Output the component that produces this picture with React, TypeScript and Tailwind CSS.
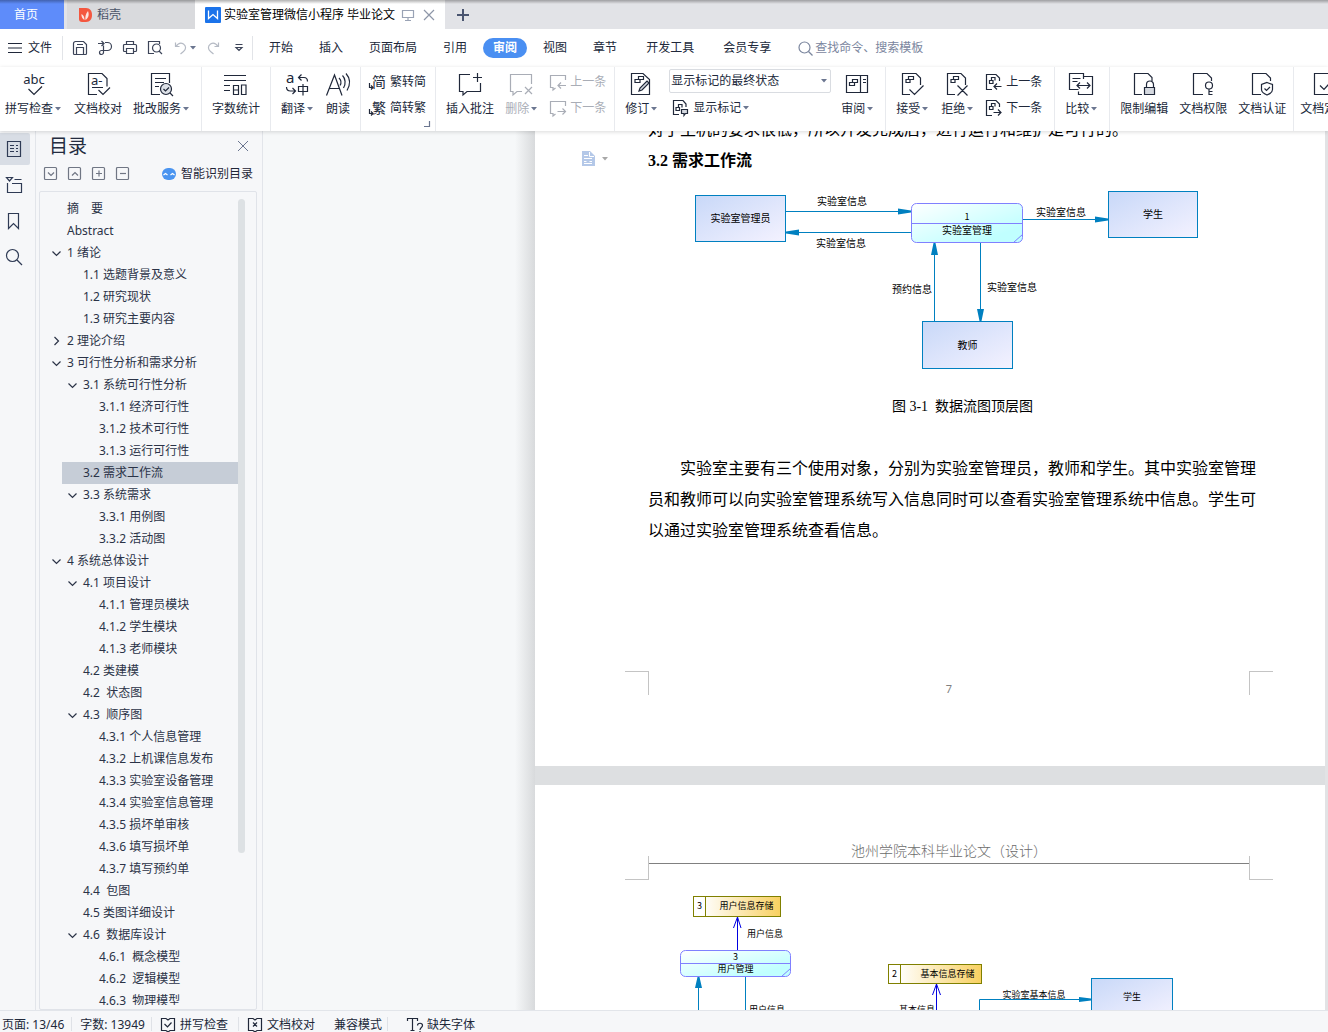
import { useState, type ReactNode } from 'react'
import clsx from 'clsx'

function Icon({ size = 24, w, children, className }: { size?: number; w?: number; children: ReactNode; className?: string }) {
  return (
    <svg
      width={w ?? size}
      height={size}
      viewBox={`0 0 ${w ?? size} ${size}`}
      fill="none"
      stroke="currentColor"
      strokeWidth="1.2"
      className={clsx('shrink-0 overflow-visible', className)}
      aria-hidden="true"
    >
      {children}
    </svg>
  )
}

function Caret({ className }: { className?: string }) {
  return (
    <svg width="6" height="4" viewBox="0 0 6 4" className={clsx('mx-[2px] shrink-0', className ?? 'fill-[#6b7690]')} aria-hidden="true">
      <path d="M0 0h6L3 3.5z" />
    </svg>
  )
}

/* ---------- large ribbon icons, 24x24 ---------- */

const docPath = 'M9 21.5H1.5V.5H15l4.5 4.5v7'

const icons = {
  spell: (
    <Icon>
      <text x="12" y="11" fontSize="13" textAnchor="middle" fill="currentColor" stroke="none">abc</text>
      <path d="M6.5 16l5.5 5.5 8-8" />
    </Icon>
  ),
  proof: (
    <Icon>
      <path d="M11 21.5H2.5V.5H16l5 5v8" />
      <text x="5" y="12" fontSize="13" fill="currentColor" stroke="none">a-</text>
      <path d="M6 14.5h11M12.5 17l4.5 4.5 7-7" />
    </Icon>
  ),
  review: (
    <Icon>
      <path d="M10 21.5H1.5V.5h18V10M5 5.5h11M5 9.5h9M5 13.5h4" />
      <circle cx="16" cy="16" r="5.5" fill="#dde1e7" />
      <path d="M13.5 16l2 2 3.5-3.5M20 20l3 3" />
    </Icon>
  ),
  count: (
    <Icon>
      <path d="M0 2.5h22M0 7.500h22M0 12.5h6M0 17.5h6M9.500 12v10M14.500 12v10M9 12.5h6M9 17h6M9 21.500h6M17.500 12h4.500v9.500h-4.500z" />
    </Icon>
  ),
  translate: (
    <Icon>
      <text x="0" y="10" fontSize="15" fill="currentColor" stroke="none">a</text>
      <path d="M15.5 1.500l-3 3 3 3M13 4.500h5c2 0 3.500 1.500 3.500 4" />
      <path d="M.5 14c0 2.500 1.500 4 4 4h5M6.500 15l3 3-3 3" />
      <path d="M12.500 13.500h9v5h-9zM17 11v11.500" />
    </Icon>
  ),
  read: (
    <Icon>
      <path d="M.5 22.500L8.500 2l7.500 20.500M3.500 15.500h10M13 5c2 2 2.500 5 1 7.500M16.500 2.500c3 3 3.500 8.500 1 12.500M20 .5c4 4.500 4.500 11 1 17" />
    </Icon>
  ),
  addNote: (
    <Icon>
      <path d="M12 1.500H1.500v17H5V22l4-3.500h13.500V10M15 4.500h9M19.500 0v9" />
    </Icon>
  ),
  delNote: (
    <Icon>
      <path d="M21.500 11V1.500h-21v17H3V22l4-3.500h5M15 14l7 7M22 14l-7 7" />
    </Icon>
  ),
  revise: (
    <Icon>
      <path d="M13 .5H1.500v21h18V6.500zM5 9.500h5v-3H5zM8.500 6.500V3.500h5v3h-4" />
      <path d="M9 18l1-3 7-7 2 2-7 7z" fill="#d5d9e0" />
    </Icon>
  ),
  pane: (
    <Icon>
      <path d="M.5 2.500h21v17H.5zM14.500 2.500v17M3.500 12.500h5v-3h-5zM6.500 9.500v-3h5v3H8M17 6.500h3M17 9.500h3" />
    </Icon>
  ),
  accept: (
    <Icon>
      <path d={docPath} />
      <path d="M5 9.500h4v-3H5zM7.500 6.500v-3h5v3H9M8.500 16.500l5 5 9-9" />
    </Icon>
  ),
  reject: (
    <Icon>
      <path d={docPath} />
      <path d="M5 9.500h4v-3H5zM7.500 6.500v-3h5v3H9M11.500 12.500l10 10M21.500 12.500l-10 10" />
    </Icon>
  ),
  compare: (
    <Icon>
      <path d="M13.500 6V.5h-14v16h9M2.500 5.500h8M2.500 8.500h5M14 3.500h8.500v18h-14v-3M7.500 12.500h12M10 9.500l-3 3 3 3M17 9.500l3 3-3 3" />
    </Icon>
  ),
  lock: (
    <Icon>
      <path d="M10 21.500H2.500V.5H16l4 4V8" />
      <path d="M14.500 14v-2.500a3.500 3.500 0 017 0V14" />
      <path d="M12.500 14.500h10v7h-10z" fill="#d5d9e0" />
    </Icon>
  ),
  key: (
    <Icon>
      <path d="M12 21.500H2.500V.5H16l4.500 4.500v3" />
      <circle cx="18" cy="12.500" r="3.500" />
      <path d="M18 16v6M18 18.500h3.500M18 21.500h3.500" />
    </Icon>
  ),
  shield: (
    <Icon>
      <path d="M11 21.500H2.500V.5H16l4.500 4.500v3" />
      <path d="M17 9.500l5.500 2v5c0 3-3 4.500-5.500 5.500-2.500-1-5.500-2.500-5.500-5.500v-5z" />
      <path d="M14.500 15.500l2 2 3.500-3.500" />
    </Icon>
  ),
  docCheck: (
    <Icon>
      <path d="M10 21.500H2.500V.5H20v21H10M8 12.500l4 4 8-9" />
    </Icon>
  ),
}

/* ---------- small ribbon icons, 16x16 ---------- */

const glyphIcon = (g: string) => (
  <Icon size={16}>
    <text x="2" y="13" fontSize="14" fill="currentColor" stroke="none">{g}</text>
    <path d="M-.5 9v4.500H2.500M1 11.500l2 2-2 2" />
  </Icon>
)

const notePrev = (
  <Icon size={16}>
    <path d="M15.500 6V1.500H.5v12H3V16l2.500-2M16 11.500H8.500M11 8.500l-3 3 3 3" />
  </Icon>
)
const noteNext = (
  <Icon size={16}>
    <path d="M15.500 6V1.500H.5v12H3V16l2.500-2M7.500 11.500H15M12.500 8.500l3 3-3 3" />
  </Icon>
)
const revPrev = (
  <Icon size={16}>
    <path d="M6 15.500H.5V.5H10l3.500 3.500v3M3.500 9.500H7v-3H3.500zM5.500 6.500v-3H9v3M15.500 12.500h-7M11 9.500l-3 3 3 3" />
  </Icon>
)
const revNext = (
  <Icon size={16}>
    <path d="M6 15.500H.5V.5H10l3.500 3.500v3M3.500 9.500H7v-3H3.500zM5.500 6.500v-3H9v3M7.500 12.500h7M12 9.500l3 3-3 3" />
  </Icon>
)
const showMarks = (
  <Icon size={16}>
    <path d="M6 14.500H.5V.5H10l3 3.500v3M3 10.500h3.500v-3H3zM5.500 7.500v-3H9v3" />
    <path d="M8.500 9.500h6v4h-2L11 15.500v-2H8.500z" fill="#d5d9e0" />
  </Icon>
)

function BigButton({ icon, label, menu, disabled }: { icon: ReactNode; label: string; menu?: boolean; disabled?: boolean }) {
  return (
    <button
      disabled={disabled}
      className={clsx('flex shrink-0 flex-col items-center gap-1 whitespace-nowrap pt-[6px]', disabled && 'text-[#a9adb6]')}
    >
      {icon}
      <span className="flex items-center leading-4">
        {label}
        {menu && <Caret />}
      </span>
    </button>
  )
}

function SmallButton({ icon, label, menu, disabled }: { icon: ReactNode; label: string; menu?: boolean; disabled?: boolean }) {
  return (
    <button
      disabled={disabled}
      className={clsx('flex h-[26px] items-center gap-1 whitespace-nowrap', disabled && 'text-[#a9adb6]')}
    >
      {icon}
      <span className="flex items-center leading-4">
        {label}
        {menu && <Caret />}
      </span>
    </button>
  )
}

function Group({ className, children }: { className?: string; children: ReactNode }) {
  return (
    <div className={clsx('flex shrink-0 items-start border-r border-[#e8eaee]', className ?? 'gap-[11px] px-[10px]')}>
      {children}
    </div>
  )
}

function TitleBar() {
  return (
    <header className="relative flex h-[29px] shrink-0 bg-[#e2e3e7]">
      <div className="pointer-events-none absolute inset-x-0 top-0 h-1 bg-gradient-to-b from-black/30 to-transparent" />
      <button className="w-16 bg-[#5e8cfa] pr-3 text-white">首页</button>
      <button className="ml-[3px] flex w-32 items-center gap-[5px] bg-[#d9dadd] pl-3 text-[#4a5368]">
        <svg width="13" height="14" viewBox="0 0 13 14" aria-hidden="true">
          <path d="M0 0h7c4 0 6 3 6 7s-2 7-6 7H3c-2 0-3-1-3-3z" fill="#f4573f" />
          <path d="M5.500 12C3.500 11 2 8.500 2.500 6c2 1 3 3 3 6zM6.500 12c-.5-3 0-6 2.500-9 1.500 4 .5 7-2.500 9z" fill="#fbe3df" />
        </svg>
        稻壳
      </button>
      <div className="flex w-[250px] items-center bg-white pl-[10px] text-black">
        <svg width="16" height="16" viewBox="0 0 16 16" className="shrink-0" aria-hidden="true">
          <rect width="16" height="16" rx="1" fill="#1b73ea" />
          <path d="M3.500 3.500v8l4.500-4 4.500 4v-8" fill="none" stroke="#fff" strokeWidth="1.300" />
        </svg>
        <span className="ml-[3px] whitespace-nowrap">实验室管理微信小程序 毕业论文</span>
        <Icon size={12} className="ml-[7px] text-[#9aa3b5]">
          <path d="M.5 1.500h11v7H.5zM6 8.500v3M3 11.500h6" />
        </Icon>
        <button aria-label="关闭" className="ml-[9px]">
          <Icon size={12} className="text-[#8d96a8]">
            <path d="M1 1l10 10M11 1L1 11" />
          </Icon>
        </button>
      </div>
      <button aria-label="新建" className="ml-3 text-[#4a5570]">
        <Icon size={12}>
          <path d="M6 0v12M0 6h12" strokeWidth="2" />
        </Icon>
      </button>
    </header>
  )
}

function QuickBar() {
  return (
    <div className="flex items-center text-[#3c4458]">
      <button aria-label="保存" className="ml-[9px]">
        <Icon size={16}>
          <path d="M1.500 3.500a2 2 0 012-2h8l3 3v9a1 1 0 01-1 1h-11a1 1 0 01-1-1zM4.500 14.500v-7h7v7M5 4.500h6" />
        </Icon>
      </button>
      <button aria-label="输出" className="ml-[9px]">
        <Icon size={16}>
          <path d="M1 3.500h6M4.500 1l2.500 2.500L4.500 6M8 2.500h2.500a4 4 0 010 8H4.500a2 2 0 102 2V5.500" />
        </Icon>
      </button>
      <button aria-label="打印" className="ml-[9px]">
        <Icon size={16}>
          <path d="M4.500 4V1.500h7V4M4 11.500H2.500a1 1 0 01-1-1v-5a1 1 0 011-1h11a1 1 0 011 1v5a1 1 0 01-1 1H12M4.500 8.500h7v5h-7z" />
        </Icon>
      </button>
      <button aria-label="打印预览" className="ml-[9px]">
        <Icon size={16}>
          <path d="M7 13.500H1.500v-12h11V4M12 11l3 3" />
          <circle cx="9.500" cy="8" r="4" />
        </Icon>
      </button>
      <button aria-label="撤销" className="ml-[11px] flex items-center text-[#b5bac4]">
        <Icon size={14}>
          <path d="M1.500 1.500v4h4M2 5.500c2-3 5-4 7.500-2.500 3 2 2.500 5.500 0 7.500L6.500 13" />
        </Icon>
        <Caret />
      </button>
      <button aria-label="恢复" className="ml-2 text-[#b5bac4]">
        <Icon size={14}>
          <path d="M12.500 1.500v4h-4M12 5.500c-2-3-5-4-7.500-2.500-3 2-2.500 5.500 0 7.500L7.500 13" />
        </Icon>
      </button>
      <button aria-label="自定义快速访问工具栏" className="ml-[15px]">
        <Icon size={8}>
          <path d="M.5.500h7M1 3.500L4 6.500l3-3z" />
        </Icon>
      </button>
    </div>
  )
}

const mainTabs = ['开始', '插入', '页面布局', '引用', '审阅', '视图', '章节']
const extraTabs = ['开发工具', '会员专享']

function MenuBar() {
  const [active, setActive] = useState('审阅')
  const tab = (t: string) => (
    <button
      key={t}
      onClick={() => setActive(t)}
      className={clsx('h-5 shrink-0 whitespace-nowrap rounded-full px-[10px]', active === t && 'bg-[#4a8ff2] font-bold text-white')}
    >
      {t}
    </button>
  )
  return (
    <div className="flex h-[38px] shrink-0 items-center bg-white">
      <button className="flex shrink-0 items-center gap-[6px] pl-2">
        <Icon w={14} size={12}>
          <path d="M0 1.500h14M0 6h14M0 10.500h14" />
        </Icon>
        文件
      </button>
      <div className="ml-[10px] h-6 w-px bg-[#e2e4e8]" />
      <QuickBar />
      <div className="ml-[9px] h-6 w-px bg-[#e2e4e8]" />
      <nav className="ml-[6px] flex gap-[6px]">{mainTabs.map(tab)}</nav>
      <nav className="ml-[9px] flex gap-[9px]">{extraTabs.map(tab)}</nav>
      <label className="ml-[17px] flex flex-1 items-center gap-[2px] text-[#7b869e]">
        <Icon size={15}>
          <circle cx="6.500" cy="6.500" r="5.500" />
          <path d="M10.500 10.500l4 4" />
        </Icon>
        <input aria-label="查找命令" placeholder="查找命令、搜索模板" className="w-full bg-transparent outline-none placeholder:text-[#7b869e]" />
      </label>
    </div>
  )
}

function Ribbon() {
  return (
    <div className="relative z-10 flex h-16 shrink-0 overflow-hidden bg-white shadow-[0_1px_4px_rgba(0,0,0,0.15)]">
      <Group className="gap-[11px] pl-[5px] pr-[10px]">
        <BigButton icon={icons.spell} label="拼写检查" menu />
        <BigButton icon={icons.proof} label="文档校对" />
        <BigButton icon={icons.review} label="批改服务" menu />
      </Group>
      <Group>
        <BigButton icon={icons.count} label="字数统计" />
      </Group>
      <Group>
        <BigButton icon={icons.translate} label="翻译" menu />
        <BigButton icon={icons.read} label="朗读" />
      </Group>
      <Group className="relative px-[9px]">
        <div className="flex flex-col pt-[2px]">
          <SmallButton icon={glyphIcon('简')} label="繁转简" />
          <SmallButton icon={glyphIcon('繁')} label="简转繁" />
        </div>
        <Icon size={6} className="absolute bottom-1 right-[5px] text-[#6b7690]">
          <path d="M5.500 0v5.500H0" />
        </Icon>
      </Group>
      <Group className="gap-[11px] pl-[10px] pr-2">
        <BigButton icon={icons.addNote} label="插入批注" />
        <BigButton icon={icons.delNote} label="删除" menu disabled />
        <div className="flex flex-col pt-[2px]">
          <SmallButton icon={notePrev} label="上一条" disabled />
          <SmallButton icon={noteNext} label="下一条" disabled />
        </div>
      </Group>
      <Group className="gap-[10px] px-[10px]">
        <BigButton icon={icons.revise} label="修订" menu />
        <div className="flex flex-col gap-[2px] pt-[2px]">
          <div className="relative h-6 w-[162px]">
            <select aria-label="显示标记的状态" className="h-full w-full appearance-none rounded-[2px] border border-[#d9dce1] bg-white pl-px pr-4">
              <option>显示标记的最终状态</option>
              <option>最终状态</option>
              <option>显示标记的原始状态</option>
              <option>原始状态</option>
            </select>
            <span className="pointer-events-none absolute right-[2px] top-[10px]"><Caret /></span>
          </div>
          <div className="pl-1">
            <SmallButton icon={showMarks} label="显示标记" menu />
          </div>
        </div>
        <BigButton icon={icons.pane} label="审阅" menu />
      </Group>
      <Group className="gap-[11px] pl-[10px] pr-3">
        <BigButton icon={icons.accept} label="接受" menu />
        <BigButton icon={icons.reject} label="拒绝" menu />
        <div className="flex flex-col pt-[2px]">
          <SmallButton icon={revPrev} label="上一条" />
          <SmallButton icon={revNext} label="下一条" />
        </div>
      </Group>
      <Group>
        <BigButton icon={icons.compare} label="比较" menu />
      </Group>
      <Group className="gap-[11px] pl-[10px] pr-[7px]">
        <BigButton icon={icons.lock} label="限制编辑" />
        <BigButton icon={icons.key} label="文档权限" />
        <BigButton icon={icons.shield} label="文档认证" />
      </Group>
      <div className="flex shrink-0 items-start pl-[6px]">
        <BigButton icon={icons.docCheck} label="文档定稿" />
      </div>
    </div>
  )
}

function Rail() {
  return (
    <nav className="flex w-9 shrink-0 flex-col gap-1 border-r border-[#e2e5ea] pt-[2px] text-[#2f3b55]">
      <button aria-label="目录" className="flex h-8 w-[30px] items-center justify-center rounded-r-[2px] bg-[#d8dde5] pr-[2px]">
        <Icon size={16}>
          <path d="M1.500.5h13v15h-13zM4 4.500h4M4 7.500h4M4 10.500h4M10 4.500h2M10 7.500h2M10 10.500h2" />
        </Icon>
      </button>
      <button aria-label="章节导航" className="flex h-8 w-[30px] items-center justify-center pr-[2px]">
        <Icon size={16}>
          <path d="M.5.500h6L3.500 4zM1.500 6v9.500h14v-9H6M8.500 2.500h7" />
        </Icon>
      </button>
      <button aria-label="书签" className="flex h-8 w-[30px] items-center justify-center pr-[2px]">
        <Icon size={16}>
          <path d="M2.500.5h10v15l-5-5-5 5z" />
        </Icon>
      </button>
      <button aria-label="查找" className="flex h-8 w-[30px] items-center justify-center pr-[2px]">
        <Icon size={16}>
          <circle cx="6.500" cy="6.500" r="6" />
          <path d="M11 11l5 5" />
        </Icon>
      </button>
    </nav>
  )
}

type OutlineItem = { text: string; level: 0 | 1 | 2; open?: boolean }

const outline: OutlineItem[] = [
  { text: '摘　要', level: 0 },
  { text: 'Abstract', level: 0 },
  { text: '1 绪论', level: 0, open: true },
  { text: '1.1 选题背景及意义', level: 1 },
  { text: '1.2 研究现状', level: 1 },
  { text: '1.3 研究主要内容', level: 1 },
  { text: '2 理论介绍', level: 0, open: false },
  { text: '3 可行性分析和需求分析', level: 0, open: true },
  { text: '3.1 系统可行性分析', level: 1, open: true },
  { text: '3.1.1 经济可行性', level: 2 },
  { text: '3.1.2 技术可行性', level: 2 },
  { text: '3.1.3 运行可行性', level: 2 },
  { text: '3.2 需求工作流', level: 1 },
  { text: '3.3 系统需求', level: 1, open: true },
  { text: '3.3.1 用例图', level: 2 },
  { text: '3.3.2 活动图', level: 2 },
  { text: '4 系统总体设计', level: 0, open: true },
  { text: '4.1 项目设计', level: 1, open: true },
  { text: '4.1.1 管理员模块', level: 2 },
  { text: '4.1.2 学生模块', level: 2 },
  { text: '4.1.3 老师模块', level: 2 },
  { text: '4.2 类建模', level: 1 },
  { text: '4.2  状态图', level: 1 },
  { text: '4.3  顺序图', level: 1, open: true },
  { text: '4.3.1 个人信息管理', level: 2 },
  { text: '4.3.2 上机课信息发布', level: 2 },
  { text: '4.3.3 实验室设备管理', level: 2 },
  { text: '4.3.4 实验室信息管理', level: 2 },
  { text: '4.3.5 损坏单审核', level: 2 },
  { text: '4.3.6 填写损坏单', level: 2 },
  { text: '4.3.7 填写预约单', level: 2 },
  { text: '4.4  包图', level: 1 },
  { text: '4.5 类图详细设计', level: 1 },
  { text: '4.6  数据库设计', level: 1, open: true },
  { text: '4.6.1  概念模型', level: 2 },
  { text: '4.6.2  逻辑模型', level: 2 },
  { text: '4.6.3  物理模型', level: 2 },
]

// space left of the fold arrow column
const indent = ['pl-0', 'pl-4', 'pl-8']

const outlineTools = [
  { label: '展开', d: 'M4 5.500l3 3 3-3' },
  { label: '收起', d: 'M4 8.500l3-3 3 3' },
  { label: '增加级别', d: 'M4 6.500h6M7 3.500v6' },
  { label: '减少级别', d: 'M4 6.500h6' },
]

function OutlinePanel() {
  const [current, setCurrent] = useState('3.2 需求工作流')
  return (
    <aside className="flex w-[227px] shrink-0 flex-col border-r border-[#e2e5ea]">
      <div className="flex h-[30px] items-center justify-between px-[13px]">
        <h2 className="text-[19px] leading-6 text-[#242c40]">目录</h2>
        <button aria-label="关闭目录">
          <Icon size={12} className="text-[#6b7690]">
            <path d="M1 1l10 10M11 1L1 11" strokeWidth="1" />
          </Icon>
        </button>
      </div>
      <div className="flex h-[25px] items-center pl-2">
        <div className="flex gap-[10px] text-[#707684]">
          {outlineTools.map((t) => (
            <button key={t.label} aria-label={t.label}>
              <Icon size={14}>
                <rect x=".5" y=".5" width="12" height="12" rx="1" />
                <path d={t.d} />
              </Icon>
            </button>
          ))}
        </div>
        <button className="ml-8 flex items-center gap-[5px] whitespace-nowrap text-[#1f2638]">
          <svg width="14" height="12" viewBox="0 0 14 12" aria-hidden="true">
            <rect width="14" height="12" rx="6" fill="#4a94f0" />
            <path d="M1.500 7l2-1.500 2 1.500M8.500 7l2-1.500 2 1.500" fill="none" stroke="#fff" strokeWidth="1.200" />
          </svg>
          智能识别目录
        </button>
      </div>
      <div className="ml-[3px] mr-[5px] mt-[5px] flex min-h-0 flex-1 rounded-[2px] border border-[#e0e3e9] pb-1 pt-[6px]">
        <ul className="min-w-0 flex-1 overflow-hidden pl-[11px]">
          {outline.map((item) => (
            <li key={item.text} className={indent[item.level]}>
              <button
                onClick={() => setCurrent(item.text)}
                className="flex h-[22px] w-full items-center whitespace-pre text-left text-[#2b3347]"
              >
                <span className="flex w-[11px] shrink-0">
                  {item.open !== undefined && (
                    <Icon size={10}>
                      <path d={item.open ? 'M1.500 3.500l4 4 4-4' : 'M3.500 1l4 4-4 4'} />
                    </Icon>
                  )}
                </span>
                <span
                  className={clsx(
                    'flex flex-1 items-center self-stretch',
                    current === item.text ? '-ml-4 bg-[#c6cdd7] pl-[21px]' : 'pl-[5px]'
                  )}
                >
                  {item.text}
                </span>
              </button>
            </li>
          ))}
        </ul>
        <div className="mb-[152px] mr-[11px] mt-px w-[7px] rounded-full bg-[#dde1e4]" />
      </div>
    </aside>
  )
}

/* ---------- data flow diagrams ---------- */

function Label({ x, y, size, children }: { x: number; y: number; size: number; children: string }) {
  return (
    <text x={x} y={y - 1} fontSize={size} textAnchor="middle" dominantBaseline="central">{children}</text>
  )
}

function Entity({ x, y, w, h, label, size }: { x: number; y: number; w: number; h: number; label: string; size: number }) {
  return (
    <g>
      <rect x={x} y={y} width={w} height={h} fill="url(#entity)" stroke="#0080c0" />
      <Label x={x + w / 2} y={y + h / 2} size={size}>{label}</Label>
    </g>
  )
}

function Process({ x, y, w, h, mid, no, label, size }: { x: number; y: number; w: number; h: number; mid: number; no: string; label: string; size: number }) {
  return (
    <g>
      <rect x={x} y={y} width={w} height={h} rx="5" fill="url(#process)" stroke="#8080ff" />
      <path d={`M${x} ${mid}h${w}M${x + w - 9} ${y + h}l9-8`} stroke="#8080ff" />
      <text x={x + w / 2} y={mid - 7} fontSize="9" textAnchor="middle" dominantBaseline="central">{no}</text>
      <Label x={x + w / 2} y={mid + size - 3} size={size}>{label}</Label>
    </g>
  )
}

function Store({ x, y, w, h, no, label }: { x: number; y: number; w: number; h: number; no: string; label: string }) {
  return (
    <g>
      <rect x={x} y={y} width={w} height={h} fill="url(#store)" stroke="#808000" />
      <path d={`M${x + 12} ${y}v${h}`} stroke="#808000" />
      <Label x={x + 6} y={y + h / 2} size={9}>{no}</Label>
      <Label x={x + w - 34} y={y + h / 2} size={9}>{label}</Label>
    </g>
  )
}

function Defs() {
  return (
    <defs>
      <linearGradient id="entity" x1="0" y1="0" x2="1" y2="1">
        <stop offset="0" stopColor="#c8d8f8" />
        <stop offset="1" stopColor="#f4f2ff" />
      </linearGradient>
      <linearGradient id="process" x1="0" y1="0" x2="1" y2="1">
        <stop offset="0" stopColor="#fff" />
        <stop offset=".8" stopColor="#c0ffff" />
      </linearGradient>
      <linearGradient id="store" x1="0" y1="0" x2="1" y2="0">
        <stop offset=".1" stopColor="#fff" />
        <stop offset="1" stopColor="#f8d060" />
      </linearGradient>
    </defs>
  )
}

function TopDiagram() {
  return (
    <svg width="601" height="215" viewBox="0 0 601 215" role="img" aria-label="数据流图顶层图">
      <Defs />
      <Entity x={47.5} y={19.5} w={90} h={46} label="实验室管理员" size={10} />
      <Process x={263.5} y={27.5} w={111} h={39} mid={47.5} no="1" label="实验室管理" size={10} />
      <Entity x={460.5} y={15.5} w={89} h={46} label="学生" size={10} />
      <Entity x={274.5} y={145.5} w={90} h={47} label="教师" size={10} />
      <path d="M138 35.500h125M263 56.500H138M375 43.500h85M286.500 145V67M332.500 67v78" stroke="#0080c0" fill="none" />
      <path
        d="M250 32.500v6l13-2v-2zM151 53.500v6l-13-2v-2zM447 40.500v6l13-2v-2zM283 79h7l-2.500-12h-2zM329 133h7l-2.500 12h-2z"
        fill="#0080c0"
      />
      <Label x={194} y={25} size={10}>实验室信息</Label>
      <Label x={193} y={67} size={10}>实验室信息</Label>
      <Label x={413} y={36} size={10}>实验室信息</Label>
      <Label x={264} y={113} size={10}>预约信息</Label>
      <Label x={364} y={111} size={10}>实验室信息</Label>
    </svg>
  )
}

function LevelDiagram() {
  return (
    <svg width="601" height="152" viewBox="0 0 601 152" role="img" aria-label="数据流图">
      <Defs />
      <Store x={45.5} y={16.5} w={87} h={20} no="3" label="用户信息存储" />
      <Process x={32.5} y={70.5} w={110} h={26} mid={83.5} no="3" label="用户管理" size={9} />
      <Store x={240.5} y={84.5} w={93} h={19} no="2" label="基本信息存储" />
      <Entity x={443.5} y={98.5} w={81} h={38} label="学生" size={9} />
      <path d="M89.500 70V37l-4 11M89.500 37l3.500 11M288.500 152v-48l-4 11M288.500 104l4 11" stroke="#0000e0" fill="none" />
      <path d="M50.500 152V97M97.500 97v55M331.500 152v-32.500H443" stroke="#0080c0" fill="none" />
      <path d="M47 108h7l-2.500-11h-2zM431 117v5l12-1.500v-2z" fill="#0080c0" />
      <Label x={117} y={54} size={9}>用户信息</Label>
      <Label x={119} y={130} size={9}>用户信息</Label>
      <Label x={269} y={130} size={9}>基本信息</Label>
      <Label x={386} y={115} size={9}>实验室基本信息</Label>
    </svg>
  )
}

function DocumentView() {
  return (
    <main className="flex min-w-0 flex-1 overflow-hidden bg-[#f6f8f9] pl-[252px] font-['Liberation_Serif','Noto_Sans_CJK_SC',serif] text-base leading-[31px] text-black">
      <div className="w-5 shrink-0 bg-gradient-to-r from-[#f6f8f9] to-[#d8dadc]" />
      <div className="flex min-w-0 flex-1 flex-col gap-[19px] bg-[#dddfe1]">
        <article className="-mt-[17px] shrink-0 bg-white pb-[71px]">
          <p className="pl-[113px] pr-[68px]">对于主机的要求很低，所以开发完成后，进行运行和维护是可行的。</p>
          <div className="flex items-center">
            <div className="flex w-[113px] shrink-0 items-center gap-1 pb-1 pl-[46px]">
              <svg width="15" height="16" viewBox="0 0 15 16" aria-hidden="true">
                <path d="M1 0h8l5 5v10H1z" fill="#b4c8e8" />
                <path d="M8.500 1v4.500H13M3 4.500h4M3 7.500h8M3 10.500h2.500M8.500 10.500H11M3 12.500h8" fill="none" stroke="#fff" />
              </svg>
              <Caret className="fill-[#a8a8a8]" />
            </div>
            <h3 className="font-bold">3.2 需求工作流</h3>
          </div>
          <div className="flex pl-[113px] font-['Noto_Sans_CJK_SC',sans-serif]">
            <TopDiagram />
          </div>
          <p className="whitespace-pre pl-[141px] pr-[76px] text-center text-sm leading-[31px]">图 3-1  数据流图顶层图</p>
          <p className="mt-[31px] pl-[113px] pr-[68px] indent-8">
            实验室主要有三个使用对象，分别为实验室管理员，教师和学生。其中实验室管理员和教师可以向实验室管理系统写入信息同时可以查看实验室管理系统中信息。学生可以通过实验室管理系统查看信息。
          </p>
          <div className="mt-[125px] flex h-6 items-start justify-between pl-[90px] pr-[52px]">
            <div className="size-6 border-r border-t border-[#c4c4c4]" />
            <span className="pt-[10px] font-['Noto_Sans',sans-serif] text-[11px] leading-4 text-[#808080]">7</span>
            <div className="size-6 border-l border-t border-[#c4c4c4]" />
          </div>
        </article>
        <article className="shrink-0 bg-white pt-14">
          <div className="flex h-[39px] items-start pl-[90px] pr-[52px]">
            <div className="size-6 self-end border-b border-r border-[#c4c4c4]" />
            <p className="flex-1 border-b border-[#808080] text-center text-sm font-light leading-[22px] text-[#6b6b6b]">池州学院本科毕业论文（设计）</p>
            <div className="size-6 self-end border-b border-l border-[#c4c4c4]" />
          </div>
          <div className="flex pl-[113px] font-['Noto_Sans_CJK_SC',sans-serif]">
            <LevelDiagram />
          </div>
        </article>
      </div>
      <div className="w-[3px] shrink-0 bg-[#e2e3e5]" />
    </main>
  )
}

function StatusBar() {
  const bar = <span className="h-[14px] w-px bg-[#dfe2e7]" />
  return (
    <footer className="flex h-[22px] shrink-0 items-start overflow-hidden whitespace-nowrap border-t border-[#e2e5ea] pl-[2px] pt-[6px] leading-4">
      <span className="mr-[7px]">页面: 13/46</span>
      {bar}
      <span className="ml-2 mr-[6px]">字数: 13949</span>
      {bar}
      <button className="ml-2 mr-[10px] flex items-center gap-1">
        <Icon size={16}>
          <path d="M6 13.500H1.500v-12H6l2 1.500 2-1.500h4.500v12H10L8 15l-2-1.500M4.500 7l3 3 4-4.500" />
        </Icon>
        拼写检查
      </button>
      {bar}
      <button className="ml-2 flex items-center gap-1">
        <Icon size={16}>
          <path d="M6 13.500H1.500v-12H6l2 1.500 2-1.500h4.500v12H10L8 15l-2-1.500M6 5.500l4 4M10 5.500l-4 4" />
        </Icon>
        文档校对
      </button>
      <span className="ml-[19px] mr-[5px]">兼容模式</span>
      {bar}
      <button className="ml-[19px] flex items-center gap-1">
        <Icon size={16}>
          <path d="M.5 4V1.500h10V4M5.500 1.500v12M3.500 13.500h4M10.500 8.500c0-3 5-3 5 0 0 2-2.500 2-2.500 4.500M13 14v1.500" />
        </Icon>
        缺失字体
      </button>
    </footer>
  )
}

export default function App() {
  return (
    <div className="flex h-screen flex-col overflow-hidden bg-[#f6f7f9] font-['Noto_Sans','Noto_Sans_CJK_SC',sans-serif] text-xs text-[#20283a]">
      <TitleBar />
      <MenuBar />
      <Ribbon />
      <div className="flex min-h-0 flex-1">
        <Rail />
        <OutlinePanel />
        <DocumentView />
      </div>
      <StatusBar />
    </div>
  )
}
